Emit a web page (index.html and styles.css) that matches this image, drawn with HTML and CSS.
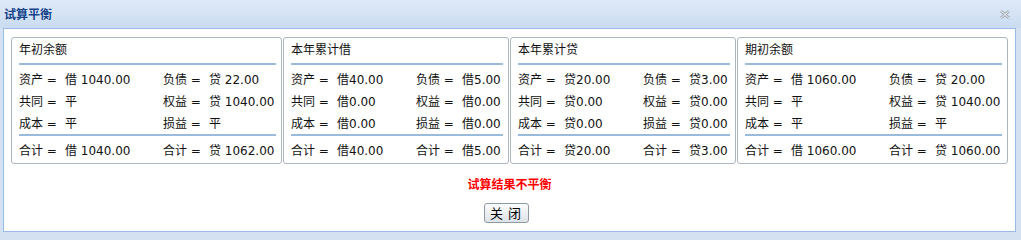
FILE: index.html
```html
<!DOCTYPE html>
<html lang="zh">
<head>
<meta charset="utf-8">
<title>试算平衡</title>
<link rel="stylesheet" href="styles.css">
</head>
<body>
<div class="win">
  <div class="win-head">
    <span class="win-title">试算平衡</span>
    <span class="win-close" title="关闭">
      <svg width="10" height="9" viewBox="0 0 10 9">
        <path d="M1 1 L9 8 M9 1 L1 8" stroke="#a3acb6" stroke-width="2.8" fill="none"/>
        <path d="M1 1 L9 8 M9 1 L1 8" stroke="#eef2f6" stroke-width="1" fill="none"/>
      </svg>
    </span>
  </div>
  <div class="win-body">
    <div class="panels">
      <div class="panel wide">
        <div class="ptitle">年初余额</div>
        <div class="sep"></div>
        <div class="grid">
          <span>资产 =</span><span>借 1040.00</span><span>负债 =</span><span>贷 22.00</span>
          <span>共同 =</span><span>平</span><span>权益 =</span><span>贷 1040.00</span>
          <span>成本 =</span><span>平</span><span>损益 =</span><span>平</span>
        </div>
        <div class="sep"></div>
        <div class="grid total">
          <span>合计 =</span><span>借 1040.00</span><span>合计 =</span><span>贷 1062.00</span>
        </div>
      </div>
      <div class="panel narrow">
        <div class="ptitle">本年累计借</div>
        <div class="sep"></div>
        <div class="grid">
          <span>资产 =</span><span>借40.00</span><span>负债 =</span><span>借5.00</span>
          <span>共同 =</span><span>借0.00</span><span>权益 =</span><span>借0.00</span>
          <span>成本 =</span><span>借0.00</span><span>损益 =</span><span>借0.00</span>
        </div>
        <div class="sep"></div>
        <div class="grid total">
          <span>合计 =</span><span>借40.00</span><span>合计 =</span><span>借5.00</span>
        </div>
      </div>
      <div class="panel narrow">
        <div class="ptitle">本年累计贷</div>
        <div class="sep"></div>
        <div class="grid">
          <span>资产 =</span><span>贷20.00</span><span>负债 =</span><span>贷3.00</span>
          <span>共同 =</span><span>贷0.00</span><span>权益 =</span><span>贷0.00</span>
          <span>成本 =</span><span>贷0.00</span><span>损益 =</span><span>贷0.00</span>
        </div>
        <div class="sep"></div>
        <div class="grid total">
          <span>合计 =</span><span>贷20.00</span><span>合计 =</span><span>贷3.00</span>
        </div>
      </div>
      <div class="panel wide">
        <div class="ptitle">期初余额</div>
        <div class="sep"></div>
        <div class="grid">
          <span>资产 =</span><span>借 1060.00</span><span>负债 =</span><span>贷 20.00</span>
          <span>共同 =</span><span>平</span><span>权益 =</span><span>贷 1040.00</span>
          <span>成本 =</span><span>平</span><span>损益 =</span><span>平</span>
        </div>
        <div class="sep"></div>
        <div class="grid total">
          <span>合计 =</span><span>借 1060.00</span><span>合计 =</span><span>贷 1060.00</span>
        </div>
      </div>
    </div>
    <div class="msg">试算结果不平衡</div>
    <div class="actions">
      <button class="btn" type="button">关 闭</button>
    </div>
  </div>
</div>
</body>
</html>
```

FILE: styles.css
```css
html, body {
  margin: 0;
  padding: 0;
}
body {
  background: #d3e1f1;
  font-family: "DejaVu Sans", "Noto Sans CJK SC", sans-serif;
  font-size: 12px;
  color: #000;
}
.win {
  width: 1021px;
  height: 237px;
  background: #d3e1f1;
  display: flex;
  flex-direction: column;
}
.win-head {
  height: 28px;
  background: linear-gradient(#dfeaf8, #cadcf1);
  display: flex;
  align-items: center;
  justify-content: space-between;
  padding: 0 11px 0 4px;
}
.win-title {
  font-weight: bold;
  color: #15428b;
  font-family: "Noto Sans CJK SC", sans-serif;
  font-size: 12px;
  line-height: 27px;
  margin-top: -1px;
}
.win-close {
  display: flex;
  width: 10px;
  height: 9px;
}
.win-body {
  margin: 0 5px 0 3px;
  background: #fff;
  border: 1px solid #99bbe8;
  padding: 8px 0 0 0;
  box-sizing: border-box;
  height: 204px;
}
.panels {
  display: flex;
  justify-content: center;
  gap: 1px;
}
.panel {
  border: 1px solid #abb6c2;
  border-radius: 3px;
  padding: 0 5px 2px 7px;
  box-sizing: border-box;
  height: 127px;
}
.panel.wide { width: 271px; }
.panel.narrow { width: 226px; }
.ptitle {
  height: 24px;
  line-height: 24px;
  color: #111;
}
.sep {
  border-top: 2px solid #9bbbdd;
  margin: 1px 0 2px 0;
}
.grid {
  display: grid;
  grid-template-columns: 46px 98px 46px auto;
  grid-auto-rows: 22px;
  align-items: center;
  color: #111;
  white-space: nowrap;
}
.narrow .grid {
  grid-template-columns: 46px 79px 46px auto;
}
.msg {
  margin-top: 10px;
  line-height: 20px;
  text-align: center;
  color: #ff0000;
  font-weight: bold;
  font-family: "Noto Sans CJK SC", sans-serif;
  font-size: 12px;
}
.actions {
  display: flex;
  justify-content: center;
  margin-top: 9px;
}
.btn {
  width: 45px;
  height: 20px;
  padding: 0;
  border: 1px solid #8f9aa6;
  border-radius: 3px;
  background: linear-gradient(#fbfcfd, #dde2e7);
  font-family: "Noto Sans CJK SC", sans-serif;
  font-size: 13px;
  line-height: 18px;
  letter-spacing: 1px;
  color: #000;
  margin-right: 7px;
}
```
